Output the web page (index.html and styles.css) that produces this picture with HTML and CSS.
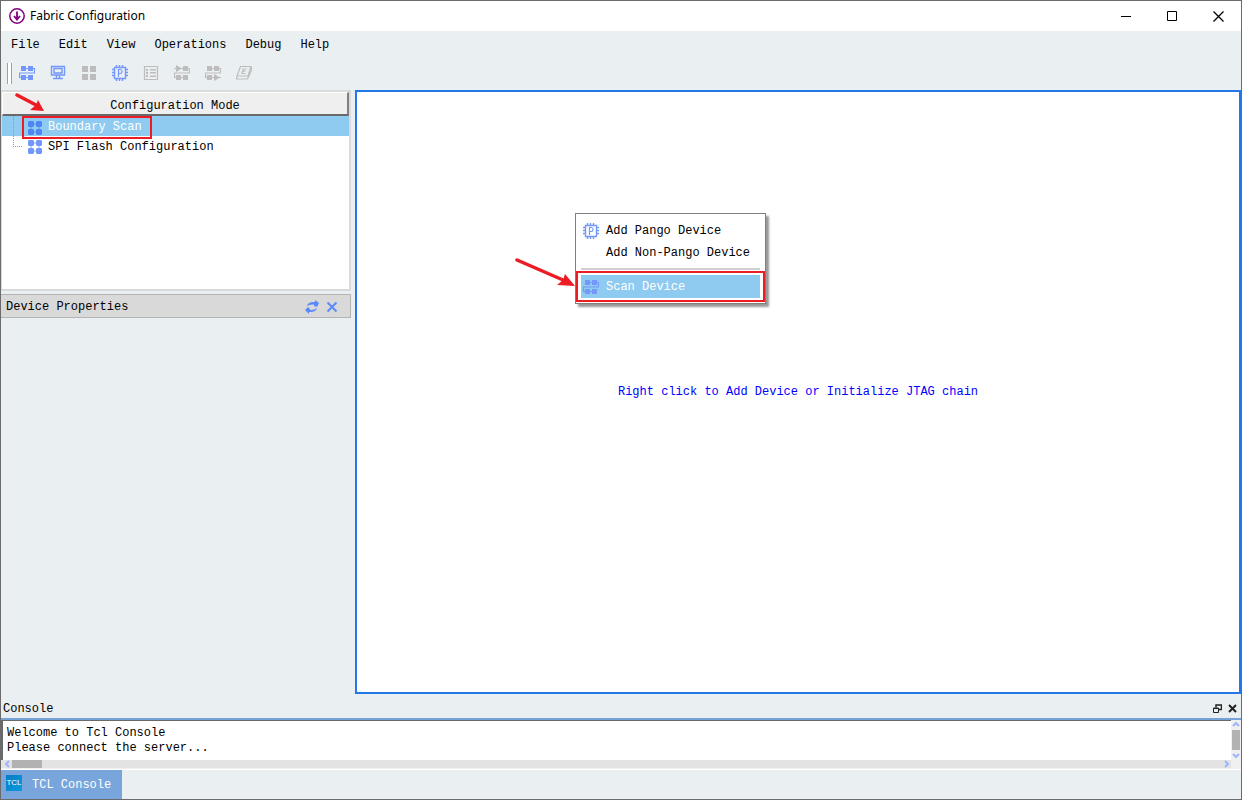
FILE: index.html
```html
<!DOCTYPE html>
<html lang="en">
<head>
<meta charset="utf-8">
<title>Fabric Configuration</title>
<link rel="stylesheet" href="styles.css">
</head>
<body>
<svg class="defs" aria-hidden="true">
  <defs>
    <symbol id="chain" viewBox="0 0 16 16">
      <path d="M2 3.500h13.500v4.500H.5v4.500H14" fill="none" stroke="currentColor" stroke-width="1.200"/>
      <path d="M2 1h5v5H2zM9 1h5v5H9zM2 10h5v5H2zM9 10h5v5H9z" fill="currentColor"/>
    </symbol>
    <symbol id="monitor" viewBox="0 0 16 16">
      <path d="M1.500 1.500h13v8.500h-13zM4 3.500h8v4.500H4zM6.500 10v3M9.500 10v3M3 13.500h10" fill="none" stroke="currentColor" stroke-width="1.400"/>
    </symbol>
    <symbol id="grid" viewBox="0 0 16 16">
      <path d="M1 1h6v6H1zM9 1h6v6H9zM1 9h6v6H1zM9 9h6v6H9z" fill="currentColor"/>
    </symbol>
    <symbol id="chip" viewBox="0 0 16 16">
      <path d="M2.500 2.500h11v11h-11zM4.500 0v2M7.500 0v2M10.500 0v2M4.500 14v2M7.500 14v2M10.500 14v2M0 4.500h2M0 7.500h2M0 10.500h2M14 4.500h2M14 7.500h2M14 10.500h2" fill="none" stroke="currentColor" stroke-width="1.400"/>
      <path d="M6.500 12V4.500h2q1.500 0 1.500 2t-1.500 2h-2" fill="none" stroke="currentColor" stroke-width="1.200"/>
    </symbol>
    <symbol id="list" viewBox="0 0 16 16">
      <path d="M1.500 1.500h13v13h-13z" fill="none" stroke="currentColor" stroke-width="1.200"/>
      <path d="M3 4h2v2H3zM3 7h2v2H3zM3 10h2v2H3zM7 4h6v1.500H7zM7 7h6v1.500H7zM7 10.500h6V12H7z" fill="currentColor"/>
    </symbol>
    <symbol id="chain-in" viewBox="0 0 16 16">
      <path d="M0 3.500h15.500v4.500H.5v4.500H14" fill="none" stroke="currentColor" stroke-width="1.200"/>
      <path d="M2 0l6 3.500L2 7zM9 1h5v5H9zM2 10h5v5H2zM9 10h5v5H9z" fill="currentColor"/>
    </symbol>
    <symbol id="chain-out" viewBox="0 0 16 16">
      <path d="M2 3.500h13.500v4.500H.5v4.500H16" fill="none" stroke="currentColor" stroke-width="1.200"/>
      <path d="M2 1h5v5H2zM9 1h5v5H9zM2 10h5v5H2zM9 9l6 3.500L9 16z" fill="currentColor"/>
    </symbol>
    <symbol id="eraser" viewBox="0 0 16 16">
      <path d="M4.500 1.500h10.500L12 11H1zM1 11l-.5 3H11.500L15.500 5V1.500" fill="none" stroke="currentColor" stroke-width="1.200" stroke-linejoin="round"/>
      <path d="M10.500 4H7.200L6 8.500h3.300M6.500 6.200h3" fill="none" stroke="currentColor" stroke-width="1.200"/>
    </symbol>
    <symbol id="nodes" viewBox="0 0 16 16">
      <path d="M2 4h12M2 12h12M4 2v12M12 2v12" fill="none" stroke="currentColor" stroke-width="2" opacity=".4"/>
      <path d="M2 1h4l1 1v4L6 7H2L1 6V2zM10 1h4l1 1v4l-1 1h-4L9 6V2zM2 9h4l1 1v4l-1 1H2l-1-1v-4zM10 9h4l1 1v4l-1 1h-4l-1-1v-4z" fill="currentColor"/>
    </symbol>
  </defs>
</svg>
<div class="window">
  <header class="titlebar">
    <svg class="app-icon" viewBox="0 0 16 16"><circle cx="8" cy="8" r="7.200" fill="none" stroke="#800080" stroke-width="1.500"/><path d="M8 3.500v8M5 8l3 3.500L11 8" fill="none" stroke="#800080" stroke-width="1.800"/></svg>
    <h1 class="title">Fabric Configuration</h1>
    <button class="win-btn" aria-label="Minimize"><svg viewBox="0 0 11 11"><path d="M0 5.500h10" /></svg></button>
    <button class="win-btn" aria-label="Maximize"><svg viewBox="0 0 11 11"><path d="M.5 .5h9v9h-9z"/></svg></button>
    <button class="win-btn" aria-label="Close"><svg viewBox="0 0 11 11"><path d="M.5 .5l10 10M10.500 .5l-10 10" stroke-width="1.300"/></svg></button>
  </header>
  <nav class="menubar">
    <button>File</button><button>Edit</button><button>View</button><button>Operations</button><button>Debug</button><button>Help</button>
  </nav>
  <div class="toolbar">
    <span class="grip"></span>
    <button aria-label="Boundary scan"><svg><use href="#chain"/></svg></button>
    <button aria-label="Cable"><svg><use href="#monitor"/></svg></button>
    <button aria-label="Arrange" disabled><svg><use href="#grid"/></svg></button>
    <button aria-label="Add device"><svg><use href="#chip"/></svg></button>
    <button aria-label="Properties" disabled><svg><use href="#list"/></svg></button>
    <button aria-label="Insert before" disabled><svg><use href="#chain-in"/></svg></button>
    <button aria-label="Insert after" disabled><svg><use href="#chain-out"/></svg></button>
    <button aria-label="Erase" disabled><svg><use href="#eraser"/></svg></button>
  </div>
  <main class="workspace">
    <aside class="side">
      <section class="modes">
        <h2 class="modes-head">Configuration Mode</h2>
        <ul class="tree">
          <li class="node selected"><span class="branch"></span><button class="marked"><svg><use href="#nodes"/></svg>Boundary Scan</button></li>
          <li class="node"><span class="branch last"></span><button><svg><use href="#nodes"/></svg>SPI Flash Configuration</button></li>
        </ul>
        <svg class="arrow arrow-tree" viewBox="0 0 30 19"><path d="M2 2L21 12" fill="none" stroke="#ed1c24" stroke-width="3.500" stroke-linecap="round"/><path d="M29 18L23 7l-2 5-6 5z" fill="#ed1c24"/></svg>
      </section>
      <section class="props">
        <h2>Device Properties</h2>
        <button aria-label="Refresh"><svg viewBox="0 0 14 14"><path d="M2 6q1-4.500 8-4V0l4 3-2 4-3-1V4.500Q5 4 2 6zM12 8q-1 4.500-8 4v2l-4-4 3-3 2 2v1q4 .5 7-2z"/></svg></button>
        <button aria-label="Close properties"><svg class="cross" viewBox="0 0 14 14"><path d="M2.500 2.500l9 9M11.500 2.500l-9 9"/></svg></button>
      </section>
    </aside>
    <section class="canvas">
      <p class="hint">Right click to Add Device or Initialize JTAG chain</p>
      <div class="context" role="menu">
        <button role="menuitem"><svg><use href="#chip"/></svg>Add Pango Device</button>
        <button role="menuitem"><svg></svg>Add Non-Pango Device</button>
        <hr>
        <div class="scan"><button role="menuitem"><svg><use href="#chain"/></svg>Scan Device</button></div>
        <svg class="arrow arrow-menu" viewBox="0 0 60 30"><path d="M2 2L48 22" fill="none" stroke="#ed1c24" stroke-width="3.500" stroke-linecap="round"/><path d="M60 28L50 16l-2 6-6 5z" fill="#ed1c24"/></svg>
      </div>
    </section>
  </main>
  <section class="console">
    <div class="console-head">
      <h2>Console</h2>
      <button aria-label="Float"><svg viewBox="0 0 9 9"><path d="M3 3.500V1h5.500v4.500H6M2.500 1h6" stroke-width="1.500"/><path d="M.5 4h5v4.500h-5zM.5 4.500h5"/></svg></button>
      <button aria-label="Close console"><svg viewBox="0 0 9 9"><path d="M1 1l7 7M8 1L1 8" stroke-width="2"/></svg></button>
    </div>
    <div class="console-box">
      <div class="output">Welcome to Tcl Console<br>Please connect the server...<span class="prompt"></span></div>
      <div class="vbar"><svg viewBox="0 0 8 5"><path d="M1 4l3-3 3 3"/></svg><span></span><svg viewBox="0 0 8 5"><path d="M1 1l3 3 3-3"/></svg></div>
      <div class="hbar"><svg viewBox="0 0 5 8"><path d="M4 1L1 4l3 3"/></svg><span></span><svg viewBox="0 0 5 8"><path d="M1 1l3 3-3 3"/></svg></div>
    </div>
  </section>
  <footer class="tabs"><button><span class="tcl">TCL</span>TCL Console</button></footer>
</div>
</body>
</html>
```
FILE: styles.css
```css
* { box-sizing: border-box; }
body { margin: 0; font: 12px/15px "Liberation Mono", monospace; color: #000; }
button { border: 0; padding: 0; background: none; font: inherit; color: inherit; white-space: nowrap; }
h1, h2, p, ul { margin: 0; padding: 0; font: inherit; list-style: none; }
svg { display: block; flex: none; }
.defs { position: absolute; width: 0; height: 0; }
.window { display: flex; flex-direction: column; height: 100vh; border: 1px solid #6b6b6b; background: #eaeff2; }

.titlebar { display: flex; align-items: center; height: 30px; padding-left: 8px; background: #fff; }
.app-icon { width: 16px; height: 16px; }
.title { flex: 1; padding-left: 5px; font: 12px/18px "Noto Sans", sans-serif; }
.win-btn { display: grid; place-items: center; width: 46px; height: 30px; }
.win-btn svg { width: 11px; height: 11px; fill: none; stroke: #000; }

.menubar { display: flex; gap: 19px; height: 27px; padding: 1px 10px 0; }
.toolbar { display: flex; align-items: center; gap: 15px; height: 32px; padding: 0 0 2px 6px; }
.toolbar button { color: #7397fb; }
.toolbar button:disabled { color: #bdbdbd; }
.toolbar svg { width: 16px; height: 16px; }
.grip { width: 5px; height: 21px; margin-right: -8px; border: solid #a0a0a0; border-width: 0 1px; background: #fff; }

.workspace { display: flex; flex: 1; min-height: 0; }
.side { width: 350px; margin-right: 4px; flex: none; }
.modes { position: relative; height: 201px; border: 2px solid #dadada; border-left-width: 1px; background: #fff; }
.modes-head { height: 24px; padding-top: 4px; border: solid; border-width: 1px 2px 2px 1px; border-color: #fff #808080 #696969 #fff; background: #efefef; text-align: center; line-height: 18px; }
.node { display: flex; height: 20px; padding-left: 11px; }
.node button { display: flex; align-items: center; gap: 5px; height: 22px; padding: 0 5px; }
.node svg { width: 16px; height: 16px; color: #7397fb; }
.selected { background: #8fcaf0; color: #fff; }
.selected svg { color: #4e86f7; }
.node .marked { height: 23px; padding: 0 10px 0 5px; outline: 2px solid #ed1c24; outline-offset: -2px; z-index: 1; }
.branch { width: 9px; height: 11px; border: dotted #999; border-width: 0 0 1px 1px; }
.selected .branch { height: 20px; border-bottom: 0; }
.arrow { position: absolute; }
.arrow-tree { left: 13px; top: 1px; width: 30px; height: 19px; }
.props { display: flex; align-items: center; gap: 6px; height: 24px; margin-top: 3px; padding: 2px 11px 0 5px; border: 1px solid #b3b3b3; border-left: 0; background: #d9d9d9; }
.props h2, .console-head h2 { flex: 1; line-height: 17px; }
.props svg { width: 14px; height: 14px; fill: #5a8afb; }
.props .cross { fill: none; stroke: #5a8afb; stroke-width: 2; }

.canvas { position: relative; display: grid; place-items: center; flex: 1; border: 2px solid #2377e6; background: #fff; }
.hint { color: #00f; }
.context { position: absolute; left: 218px; top: 121px; width: 191px; padding: 6px 1px 1px; border: 1px solid #808080; background: #fff; box-shadow: 3px 3px 2px #999; }
.context button { display: flex; align-items: center; gap: 7px; width: 100%; height: 22px; padding-left: 6px; }
.context svg { width: 16px; height: 16px; color: #7397fb; }
.context hr { height: 2px; margin: 4px 4px 1px; border: 0; background: #cfcfcf; }
.scan { padding: 2px 3px; border: 2px solid #ed1c24; margin: 0 -1px; }
.context .scan button { height: 23px; padding: 1px 0 0 2px; background: #8fcaf0; color: #fff; }
.context .arrow-menu { left: -61px; top: 44px; width: 60px; height: 30px; }

.console-head { display: flex; align-items: center; gap: 6px; height: 24px; padding: 6px 4px 0 2px; }
.console-head svg { width: 9px; height: 9px; margin-bottom: 2px; fill: none; stroke: #222; }
.console-box { display: grid; grid-template: 40px 8px / 1fr 9px; padding-right: 1px; border-top: 2px solid #75a3d8; border-bottom: 1px solid #f0f0f0; background: #f0f0f0; }
.output { padding: 5px 4px 0; border: solid #696969; border-width: 1px 0 0 2px; background: #fff; }
.prompt { display: block; width: 3px; height: 1px; margin: 4px 0 0 2px; background: #444; }
.vbar, .hbar { display: flex; align-items: center; justify-content: space-between; }
.vbar { flex-direction: column; padding: 2px 0; background: #f0f0f0; }
.vbar svg, .hbar svg { fill: none; stroke: #9eb5fc; stroke-width: 2; }
.vbar svg { width: 8px; height: 5px; }
.vbar span { width: 8px; height: 20px; background: #b2b2b2; }
.hbar { background: #e3e3e3; }
.hbar svg { width: 5px; height: 8px; margin: 0 2px 0 4px; }
.hbar span { width: 30px; height: 8px; margin-right: auto; background: #b2b2b2; }
.tabs { height: 30px; border-top: 1px solid #fff; }
.tabs button { display: flex; align-items: center; gap: 10px; height: 29px; padding: 1px 11px 0 5px; background: #78a6dc; color: #fff; line-height: 17px; }
.tcl { width: 16px; height: 16px; margin-bottom: 4px; background: linear-gradient(135deg, #087bc4, #0a9bdd); font: 8px/16px "Liberation Sans", sans-serif; text-align: center; }
```
